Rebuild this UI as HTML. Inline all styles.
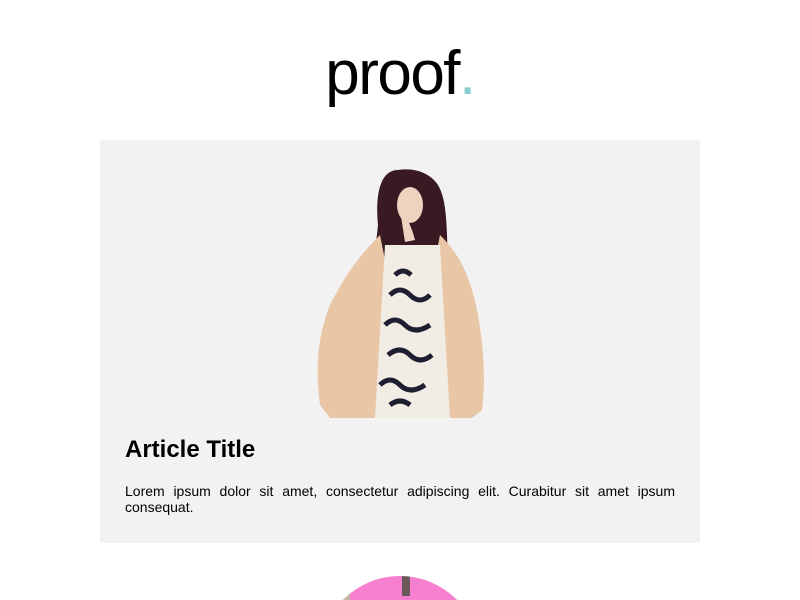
<!DOCTYPE html>
<html style="overflow:hidden"><head><style>
html,body{overflow:hidden;height:600px}
body{margin:0;background:#fff;width:800px;font-family:"Liberation Sans",Arial,sans-serif;position:relative}
.logo{position:absolute;left:0;width:800px;top:34px;text-align:center;font-size:62px;letter-spacing:-1.5px;color:#000;line-height:80px}
.logo span{color:#86cfd0}
.card{position:absolute;left:100px;top:140px;width:600px;height:403px;background:#f2f2f2}
h1{position:absolute;left:125px;top:436px;margin:0;font-size:24px;font-weight:bold}
p{position:absolute;left:125px;top:483px;width:550px;margin:0;font-size:14px;line-height:16px;text-align:justify}
.clip{position:absolute;left:320px;top:576px;width:160px;height:24px;overflow:hidden}
.circ{position:absolute;left:0;top:0;width:160px;height:160px;border-radius:50%;background:#f77fcf;overflow:hidden}
</style></head><body>
<div class="logo">proof<span>.</span></div>
<div class="card"></div>
<svg style="position:absolute;left:300px;top:165px" width="200" height="260">
<path d="M98 5 C80 5 75 30 78 60 C75 90 70 110 78 120 L150 110 C145 80 150 40 138 20 C128 5 110 3 98 5Z" fill="#3a1a22"/>
<path d="M80 70 C60 90 45 110 30 140 C18 170 15 200 20 240 L30 253 L75 253 L80 200 L90 120Z" fill="#e8c6a6"/>
<path d="M140 70 C160 90 170 110 178 150 C185 190 185 220 182 245 L172 253 L140 253 L138 200 L130 120Z" fill="#e8c6a6"/>
<path d="M85 80 L140 80 L150 253 L75 253Z" fill="#f1ece4"/>
<path d="M90 130 q10 -10 20 0 t20 0 M85 160 q10 -10 20 0 t25 0 M88 190 q12 -10 22 0 t22 0 M80 220 q10 -10 20 0 t25 0 M95 110 q8 -8 16 0 M90 240 q10 -8 20 0" stroke="#1e1e30" stroke-width="5" fill="none"/>
<ellipse cx="110" cy="40" rx="13" ry="18" fill="#f0d2c0"/>
<path d="M100 45 q10 10 15 30 l-10 2 z" fill="#f0d2c0"/>
</svg>
<h1>Article Title</h1>
<p>Lorem ipsum dolor sit amet, consectetur adipiscing elit. Curabitur sit amet ipsum consequat.</p>
<div class="clip"><div class="circ"><div style="position:absolute;left:0;top:0;width:30px;height:60px;background:#c4b8a8"></div><div style="position:absolute;left:82px;top:0;width:8px;height:20px;background:#6a5a5a"></div></div></div>
</body></html>
